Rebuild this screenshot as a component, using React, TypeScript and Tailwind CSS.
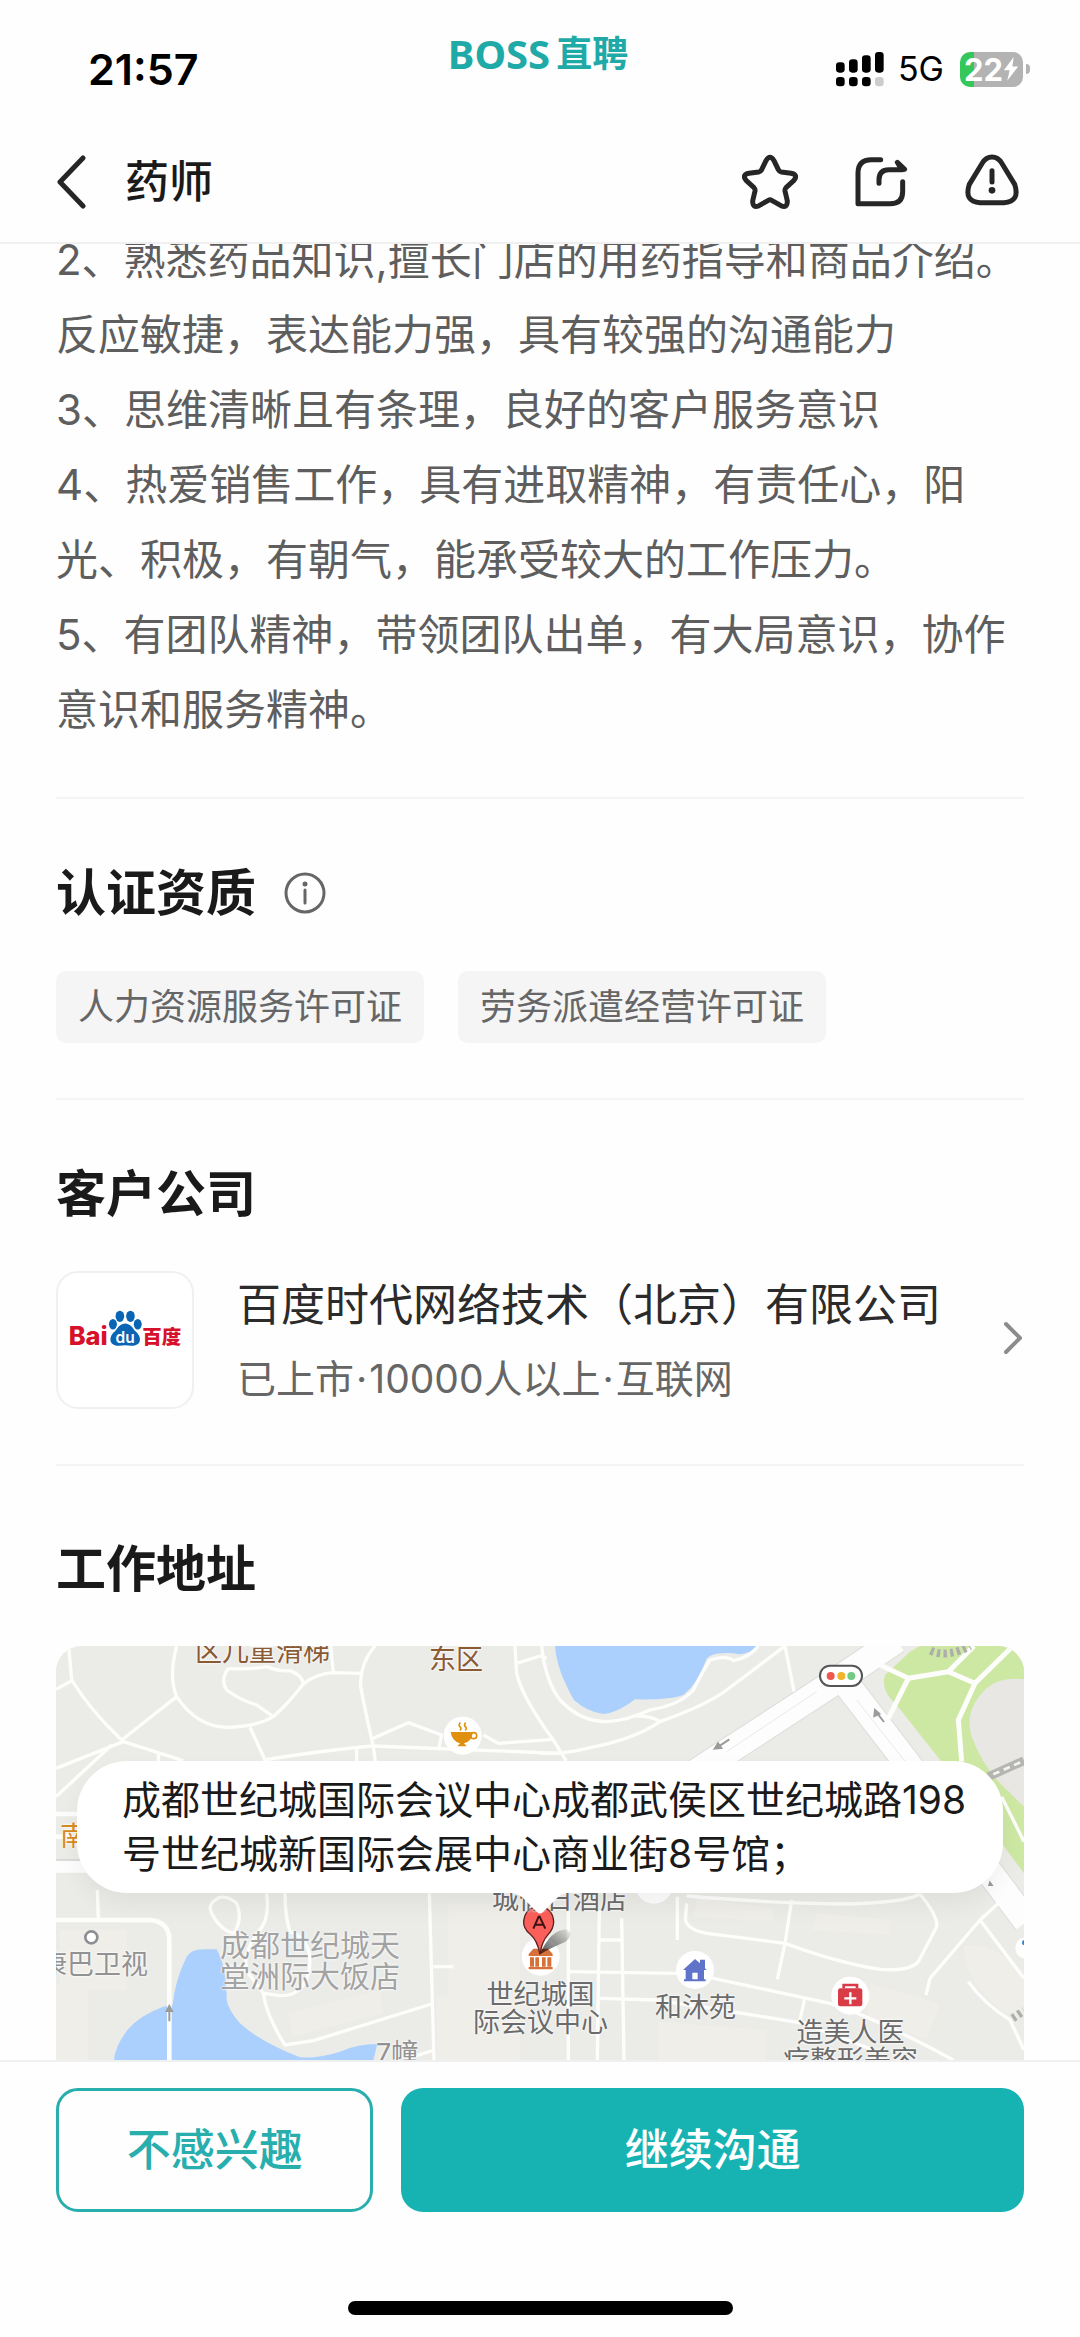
/**
 * JobDetail — lower part of the job detail screen.
 * Fixed header, scrolled content, fixed action bar.
 */
import type { ReactNode } from 'react';

const DESCRIPTION = [
  '2、熟悉药品知识,擅长门店的用药指导和商品介绍。',
  '反应敏捷，表达能力强，具有较强的沟通能力',
  '3、思维清晰且有条理，良好的客户服务意识',
  '4、热爱销售工作，具有进取精神，有责任心，阳',
  '光、积极，有朝气，能承受较大的工作压力。',
  '5、有团队精神，带领团队出单，有大局意识，协作',
  '意识和服务精神。',
];

const LICENSES = ['人力资源服务许可证', '劳务派遣经营许可证'];

const iconCls = 'size-14 fill-none stroke-[#262626] stroke-[15]';
const haloCls = '[text-shadow:0_0_3px_#fff,0_0_2px_#fff]';
const poiCls = `absolute whitespace-nowrap text-center text-[27px] leading-[28px] text-[#6b6b6b] ${haloCls}`;

function StatusBar() {
  return (
    <div className="grid h-[122px] grid-cols-3 items-center pt-4">
      <span className="pl-[88px] text-[43px] leading-none font-semibold text-black">21:57</span>
      <div className="mt-4 flex items-center justify-center gap-[6px] self-start pr-1 leading-[44px] font-bold text-[#1fa9a7]">
        <span className="font-['Noto_Sans'] text-[40px]">BOSS</span>
        <span className="text-[36px]">直聘</span>
      </div>
      <div className="flex items-center justify-end pr-[50px]">
        <svg className="h-9 w-12" viewBox="351 92 144 108">
          <rect x="351" y="126" width="26" height="31" rx="10" />
          <rect x="390" y="117" width="26" height="40" rx="10" />
          <rect x="429" y="105" width="26" height="52" rx="10" />
          <rect x="468" y="95" width="26" height="62" rx="10" />
          <rect x="351" y="170" width="26" height="28" rx="10" />
          <rect x="390" y="170" width="26" height="28" rx="10" />
          <rect x="429" y="170" width="26" height="28" rx="10" />
          <rect x="468" y="170" width="26" height="28" rx="10" fill="#ccc" />
        </svg>
        <span className="ml-[14px] text-[34px] leading-none text-black">5G</span>
        <div className="ml-4 flex items-center gap-[3px]">
          <div className="flex h-[35px] w-[63px] items-center justify-center overflow-hidden rounded-[10px] bg-[linear-gradient(90deg,#35c759_14px,#b3b3b3_14px)] text-[31px] leading-none font-bold text-white">
            22
            <svg className="h-6 w-4 fill-white" viewBox="0 0 42 70">
              <path d="M29 0 0 39h17L10 69 42 28H25z" />
            </svg>
          </div>
          <span className="h-[10px] w-[4px] rounded-r-full bg-[#b3b3b3]" />
        </div>
      </div>
    </div>
  );
}

function NavBar() {
  return (
    <nav className="flex h-[120px] items-center pr-[60px] pl-14">
      <button aria-label="返回" className="mr-[39px]">
        <svg className="h-[54px] w-[30px] fill-none stroke-[#262626] stroke-[5]" viewBox="0 0 30 54">
          <path d="M27 3 4 27l23 24" strokeLinecap="round" strokeLinejoin="round" />
        </svg>
      </button>
      <h1 className="flex-1 text-[44px] font-medium text-[#1a1a1a]">药师</h1>
      <div className="flex gap-[55px]">
        <button aria-label="收藏">
          <svg className={iconCls} viewBox="66 402 168 168" strokeLinejoin="round">
            <path d="M138 422Q150 402 162 422L175 449Q178 455 184 456L213 460Q236 464 221 482L198 503Q194 507 195 513L202 543Q202 566 183 557L155 541Q150 538 145 541L117 557Q98 566 98 543L105 513Q106 507 102 503L79 482Q64 464 87 460L116 456Q122 455 125 449Z" />
          </svg>
        </button>
        <button aria-label="分享">
          <svg className={iconCls} viewBox="400 402 168 168" strokeLinecap="round" strokeLinejoin="round">
            <path d="M483 419H455Q415 419 415 459V551H511Q549 551 549 515V485" />
            <path d="M478 490V479Q478 449 508 449H548" />
            <path d="M533 427 555 448H545Z" />
          </svg>
        </button>
        <button aria-label="举报">
          <svg className={iconCls} viewBox="732 402 168 168" strokeLinecap="round" strokeLinejoin="round">
            <path d="M816 411Q834 411 845 429L884 493Q901 545 852 548H780Q731 545 748 493L787 429Q798 411 816 411Z" />
            <path d="M816 452V486" />
            <circle cx="816" cy="511" r="10" className="fill-[#262626] stroke-none" />
          </svg>
        </button>
      </div>
    </nav>
  );
}

function SectionTitle({ children }: { children: ReactNode }) {
  return <h2 className="text-[50px] leading-[70px] font-bold text-[#1a1a1a]">{children}</h2>;
}

function BaiduLogo() {
  return (
    <svg className="h-[39px] w-[115px]" viewBox="80 178 346 118" role="img" aria-label="百度">
      <text x="81" y="288" fontSize="77" fontWeight="800" fill="#d7102b">Bai</text>
      <text x="304" y="283" fontSize="59" fontWeight="900" fill="#d7102b">百度</text>
      <g fill="#0a66b4">
        <ellipse cx="236" cy="200" rx="13" ry="17" />
        <ellipse cx="268" cy="200" rx="13" ry="17" />
        <ellipse cx="215" cy="224" rx="12" ry="16" />
        <ellipse cx="290" cy="224" rx="12" ry="16" />
        <path d="M252 222Q268 222 280 242Q300 258 296 276Q289 294 252 288Q215 294 208 276Q204 258 224 242Q236 222 252 222Z" />
      </g>
      <text x="252" y="280" fontSize="47" fontWeight="600" textAnchor="middle" fill="#fff">du</text>
    </svg>
  );
}

function MapDrawing() {
  return (
    <svg className="absolute inset-0 size-full" viewBox="48 78 2904 1242" preserveAspectRatio="xMidYMid slice">
      <rect x="48" y="78" width="2904" height="1242" fill="#ebebe8" />

      {/* buildings */}
      <g fill="#efeee9">
        <path d="M60 930H262V1110H145V1320H48V1090H60Z" />
        <path d="M1225 850H1440V1320H1190V1130H1225Z" />
        <path d="M740 1180 1020 1110 1030 1180 760 1250Z" />
        <path d="M1970 835 2200 865V905L1960 890Z" />
        <path d="M2330 880 2550 900 2545 945 2320 930Z" />
        <path d="M1855 1205 2180 1230V1320H1855Z" />
        <path d="M2490 1090 2700 1150 2660 1260 2480 1190Z" />
        <path d="M2770 980Q2860 960 2952 1060V1170L2900 1180Q2780 1100 2770 980Z" />
      </g>

      {/* water */}
      <g fill="#abd0fd">
        <path d="M1545 78H2150Q2120 110 2080 100Q2010 95 1998 120Q1975 190 1930 225Q1890 240 1785 238Q1730 280 1690 282Q1640 275 1602 240Q1550 150 1545 78Z" />
        <path d="M500 988Q455 985 440 1010Q405 1080 398 1155L370 1160Q300 1185 262 1230Q225 1280 222 1320H1000L1012 1272Q950 1272 900 1295Q840 1315 780 1312Q660 1265 600 1210Q565 1170 560 1140Q560 1040 530 988Z" />
      </g>

      {/* park */}
      <path d="M2640 78H2910L2952 130V760L2900 690 2740 470 2570 255Q2520 210 2535 165L2610 95Z" fill="#cde8a3" />
      <path d="M2952 178Q2880 170 2840 205Q2770 270 2795 350Q2825 430 2880 490L2952 560Z" fill="#e8e7e4" />

      {/* main roads */}
      <g fill="none" stroke="#dcdcda" strokeWidth="84">
        <path d="M1960 462 2400 175 2570 60" />
        <path d="M2410 180 2596 422 2960 905" />
      </g>
      <g fill="none" stroke="#fdfdfd" strokeWidth="78">
        <path d="M1960 462 2400 175 2570 60" />
        <path d="M2410 180 2596 422 2960 905" />
      </g>
      <path d="M2060 395 2330 215M2450 240 2600 430" fill="none" stroke="#e9e9ea" strokeWidth="3" />
      <path d="M48 582H115M48 650H90M48 735H180" fill="none" stroke="#fdfdfd" strokeWidth="14" />
      <path d="M48 740H160" fill="none" stroke="#fdfdfd" strokeWidth="36" />
      <path d="M48 720H150" fill="none" stroke="#d5d5d3" strokeWidth="4" />

      {/* side streets */}
      <g fill="none" stroke="#fdfdfb" strokeWidth="10" strokeLinejoin="round">
        <path d="M86 78 95 180Q150 270 245 360M48 208 95 182" />
        <path d="M410 78Q385 170 410 230Q470 320 560 322Q650 320 700 290Q745 250 790 192Q830 160 880 158L965 160" />
        <path d="M410 230 245 360M872 78 880 158" />
        <path d="M1005 78Q960 130 962 200Q975 270 1000 380L1006 425" />
        <path d="M565 145Q620 150 680 140Q720 156 750 152Q785 165 790 190M565 145Q540 180 560 210Q600 240 650 255L700 290" />
        <path d="M630 322 675 420M48 445 250 365 430 422M48 530 215 375M355 400V425" />
        <path d="M670 420Q860 390 1000 378L1560 400M950 380V425" />
        <path d="M1000 355 1105 308 1205 345 1195 390M1330 345 1375 370 1540 358" />
        <path d="M1425 78 1430 160Q1445 230 1540 360L1578 422M1430 130 1500 108 1520 115" />
        <path d="M1505 78Q1515 180 1560 240Q1620 305 1700 305Q1760 302 1830 270Q1920 255 1960 210Q1990 150 2010 120Q2060 105 2080 122Q2130 112 2155 78" />
        <path d="M1500 400Q1580 402 1640 385Q1780 360 1860 305Q2000 255 2060 210L2235 78M1790 288Q1835 288 1860 305M2235 78 2262 215" />
        <path d="M172 810 175 895M540 832Q500 850 515 880Q540 930 580 940Q610 900 590 850Q565 828 540 832" />
        <path d="M680 820Q690 900 655 935Q600 1010 625 1060L670 1120M735 820Q735 890 750 935Q820 960 808 1050Q790 1130 720 1127L670 1120Q680 1190 735 1275L820 1262 1175 1152" />
        <path d="M1168 820 1182 1320M1180 1040H1240M1182 1290 1090 1320" />
        <path d="M1585 870V1320M1678 870 1672 1320M1745 895 1752 1320M1680 960H1745" />
        <path d="M1585 1055 1910 1060 2020 1075 2370 1150Q2500 1190 2740 1320M1680 1135 1850 1140Q2050 1170 2290 1210L2500 1290M2295 1130 2280 1200" />
        <path d="M1912 830V960M1940 850 1936 900Q1945 930 2000 940L2235 970Q2400 1030 2520 1048Q2610 1055 2635 1025L2690 920Q2695 890 2640 822M2255 840 2235 970 2212 1078" />
        <path d="M1940 828Q2200 850 2400 852Q2590 850 2640 822" />
        <path d="M2875 850 2820 900 2670 1075 2658 1125M2820 900 2952 1075M2785 1085Q2830 1150 2910 1200L2952 1290M2885 530 2952 665" />
      </g>
      <path d="M48 900H330Q388 905 388 960V1320" fill="none" stroke="#fdfdfb" strokeWidth="14" />
      <g fill="none" stroke="#fdfdfb" strokeWidth="15" strokeLinejoin="round">
        <path d="M2510 130 2605 175 2725 155 2805 190 2755 300 2765 425" />
        <path d="M2605 175 2545 295M2725 155 2802 78M2805 190 2912 85" />
      </g>

      {/* railways */}
      <path d="M2845 470 2952 422" stroke="#b5b5b1" strokeWidth="26" />
      <path d="M2860 463 2952 422" stroke="#f4f4f2" strokeWidth="8" strokeDasharray="20 14" />
      <path d="M2672 92Q2720 115 2790 78M2918 1195 2952 1172" fill="none" stroke="#aeaeaa" strokeWidth="24" strokeDasharray="10 10" />

      {/* direction arrows */}
      <g stroke="#9b9b99" strokeWidth="6" fill="#9b9b99">
        <path d="M2068 358 2035 380M2024 386 2034 370 2044 384Z" />
        <path d="M2532 306 2512 280M2505 270 2503 288 2518 281Z" />
        <path d="M388 1204V1170M388 1158 380 1173H396Z" />
        <path d="M2848 795 2850 788 2855 795Z" />
      </g>

      {/* traffic light */}
      <rect x="2340" y="137" width="126" height="61" rx="30" fill="#fff" stroke="#555" strokeWidth="6" />
      <circle cx="2372" cy="168" r="12" fill="#f0584f" />
      <circle cx="2404" cy="168" r="12" fill="#f2b429" />
      <circle cx="2434" cy="168" r="12" fill="#72cb82" />

      {/* poi markers */}
      <circle cx="154" cy="952" r="18" fill="#fff" stroke="#8b8f94" strokeWidth="8" />
      <circle cx="1842" cy="795" r="56" fill="#fdfdfd" />
      <circle cx="2958" cy="984" r="32" fill="#fff" />
      <circle cx="2954" cy="968" r="8" fill="#2a86d8" />
      <circle cx="1268" cy="347" r="57" fill="#fff" />
      <g fill="#e0900f">
        <path d="M1232 336H1298V340Q1294 366 1272 370L1280 379H1252L1260 370Q1236 364 1232 336Z" />
        <circle cx="1301" cy="347" r="9" fill="none" stroke="#e0900f" strokeWidth="5" />
        <path d="M1261 308Q1254 315 1261 321Q1266 327 1259 331M1277 308Q1270 315 1277 321Q1282 327 1275 331" fill="none" stroke="#e0900f" strokeWidth="5" />
      </g>
      <circle cx="1965" cy="1050" r="57" fill="#fff" />
      <path d="M1965 1017 1929 1050H1937V1078H1932V1084H1997V1078H1992V1050H2000L1995 1045V1019H1980V1030ZM1957 1058H1973V1078H1957Z" fill="#5f74c9" fillRule="evenodd" />
      <circle cx="2431" cy="1127" r="57" fill="#fff" />
      <path d="M2411 1105V1095H2451V1105" fill="none" stroke="#d93c47" strokeWidth="8" />
      <rect x="2394" y="1105" width="73" height="54" rx="7" fill="#d93c47" />
      <path d="M2431 1117V1153M2413 1135H2449" stroke="#fff" strokeWidth="7" />
      <circle cx="1502" cy="1010" r="57" fill="#fff" />
      <path d="M1466 1002 1480 986H1524L1538 1002V1008H1466ZM1470 1012H1482V1040H1470ZM1486 1012H1497V1040H1486ZM1506 1012H1517V1040H1506ZM1522 1012H1534V1040H1522ZM1466 1041H1538V1048H1466Z" fill="#d8703a" />

      {/* pin */}
      <defs>
        <linearGradient id="pinShadow" x1="0" y1="1" x2="1" y2="0">
          <stop offset="0" stopOpacity=".7" />
          <stop offset="1" stopOpacity=".05" />
        </linearGradient>
      </defs>
      <path d="M1500 1003Q1530 930 1580 928Q1604 945 1575 966Q1530 985 1500 1003Z" fill="url(#pinShadow)" />
      <path d="M1500 1003Q1492 960 1470 942Q1450 925 1451 905Q1455 862 1496 860Q1538 862 1541 905Q1541 925 1524 944Q1505 965 1500 1003Z" fill="#fb5f59" stroke="#5b2020" strokeWidth="4" />
      <path d="M1480 926 1496 890H1499L1516 926M1486 914H1510" fill="none" stroke="#3b1313" strokeWidth="6" />
    </svg>
  );
}

function AddressMap() {
  return (
    <div className="relative h-[420px] overflow-hidden rounded-t-[26px] bg-[#ebebe8]">
      <div className="absolute top-0 left-1/2 h-[414px] w-[968px] -translate-x-1/2">
        <MapDrawing />
        <span className={`${poiCls} -top-2 left-[139px] text-[#8a5a35]`}>区儿童滑梯</span>
        <span className={`${poiCls} top-0 left-[373px] text-[#8a5a35]`}>东区</span>
        <span className={`${poiCls} top-[177px] left-1 text-[#d98a22]`}>南</span>
        <span className={`${poiCls} top-[305px] -left-4 text-[#929292]`}>康巴卫视</span>
        <span className={`absolute top-[284px] left-[164px] text-[30px] leading-[31px] text-[#a3a3a3] ${haloCls}`}>
          成都世纪城天
          <br />
          堂洲际大饭店
        </span>
        <span className={`${poiCls} top-[394px] left-[320px] text-[#929292]`}>7幢</span>
        <span className={`${poiCls} top-[240px] left-[436px]`}>城假日酒店</span>
        <span className={`${poiCls} top-[335px] left-[417px]`}>
          世纪城国
          <br />
          际会议中心
        </span>
        <span className={`${poiCls} top-[348px] left-[599px]`}>和沐苑</span>
        <span className={`${poiCls} top-[373px] left-[727px]`}>
          造美人医
          <br />
          疗整形美容
        </span>
      </div>
      <div className="absolute inset-x-[21px] top-[115px] rounded-[50px] bg-white py-3 pr-7 pl-[45px] text-[39px] leading-[54px] text-[#1a1a1a] shadow-[0_12px_24px_rgba(0,0,0,0.05)]">
        成都世纪城国际会议中心成都武侯区世纪城路198号世纪城新国际会展中心商业街8号馆；
        <svg className="absolute top-full left-1/2 h-[22px] w-[54px] -translate-x-1/2 fill-white" viewBox="0 0 54 22">
          <path d="M0 0Q6 1 10 5L24 19Q27 22 30 19L44 5Q48 1 54 0Z" />
        </svg>
      </div>
    </div>
  );
}

export default function JobDetail() {
  return (
    <div
      lang="zh-CN"
      className="flex h-screen flex-col overflow-hidden bg-[#fefefe] font-['Inter','Noto_Sans_CJK_SC',sans-serif]"
    >
      <header className="shrink-0 border-b-2 border-[#f0f0f0]">
        <StatusBar />
        <NavBar />
      </header>

      <main className="min-h-0 flex-1 overflow-hidden px-14">
        <div className="-mt-[22px] border-b-2 border-[#f5f5f5] pb-[50px] text-[42px] leading-[75px] whitespace-nowrap text-[#5e5e5e]">
          {DESCRIPTION.map((line) => (
            <p key={line}>{line}</p>
          ))}
        </div>

        {/* Licenses */}
        <section className="border-b-2 border-[#f5f5f5] pt-[59px] pb-[55px]">
          <div className="flex items-center gap-7">
            <SectionTitle>认证资质</SectionTitle>
            <button aria-label="说明">
              <svg className="size-[42px] fill-none stroke-[#666] stroke-[3]" viewBox="0 0 42 42">
                <circle cx="21" cy="21" r="19" />
                <path d="M21 18V31" strokeLinecap="round" />
                <circle cx="21" cy="12" r="2.5" className="fill-[#666] stroke-none" />
              </svg>
            </button>
          </div>
          <div className="mt-[43px] flex gap-[34px]">
            {LICENSES.map((l) => (
              <span key={l} className="rounded-[10px] bg-[#f5f5f5] px-[22px] text-[36px] leading-[72px] text-[#666]">
                {l}
              </span>
            ))}
          </div>
        </section>

        {/* Client company */}
        <section className="border-b-2 border-[#f5f5f5] pt-[59px] pb-[55px]">
          <SectionTitle>客户公司</SectionTitle>
          <a href="#company" className="mt-[42px] flex items-center">
            <div className="flex size-[138px] items-center justify-center rounded-[22px] border-2 border-[#f0f0f0] bg-white pb-6">
              <BaiduLogo />
            </div>
            <div className="ml-[43px] flex flex-1 flex-col gap-[14px] pt-1 whitespace-nowrap">
              <p className="text-[44px] leading-[60px] text-[#2b2b2b]">百度时代网络技术（北京）有限公司</p>
              <p className="flex gap-[2px] text-[39px] leading-[60px] text-[#666]">
                <span>已上市</span>
                <span>·</span>
                <span>10000人以上</span>
                <span>·</span>
                <span>互联网</span>
              </p>
            </div>
            <svg className="mb-1 h-9 w-[22px] fill-none stroke-[#8c8c8c] stroke-[4]" viewBox="0 0 22 36">
              <path d="M4 4 18 18 4 32" strokeLinecap="round" strokeLinejoin="round" />
            </svg>
          </a>
        </section>

        {/* Work address */}
        <section className="pt-[68px]">
          <SectionTitle>工作地址</SectionTitle>
          <div className="mt-[42px]">
            <AddressMap />
          </div>
        </section>
      </main>

      <footer className="shrink-0 border-t-2 border-[#f0f0f0] bg-[#fefefe] px-14 pt-[26px] pb-[22px]">
        <div className="flex gap-7 text-[44px] font-medium">
          <button className="h-[124px] flex-1 rounded-[22px] border-[3px] border-[#27aead] text-[#27aead]">不感兴趣</button>
          <button className="h-[124px] flex-2 rounded-[22px] bg-[#17b3b3] text-white">继续沟通</button>
        </div>
        <div className="mx-auto mt-[89px] h-[14px] w-[385px] rounded-full bg-black" />
      </footer>
    </div>
  );
}
